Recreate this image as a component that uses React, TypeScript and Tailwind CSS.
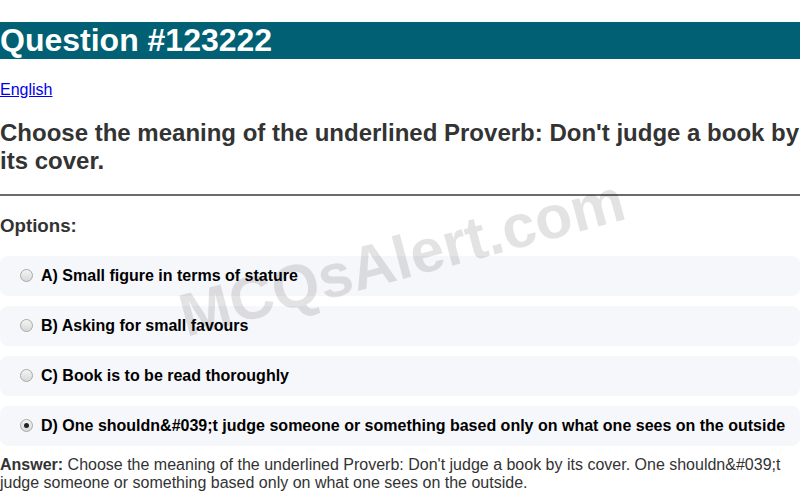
const options = [
  { label: "A) Small figure in terms of stature", checked: false },
  { label: "B) Asking for small favours", checked: false },
  { label: "C) Book is to be read thoroughly", checked: false },
  {
    label: "D) One shouldn&#039;t judge someone or something based only on what one sees on the outside",
    checked: true,
  },
];

function Radio({ checked }: { checked: boolean }) {
  return (
    <span className="flex h-[13px] w-[13px] shrink-0 items-center justify-center rounded-full border border-[#a9a9a9] bg-gradient-to-b from-[#f4f4f4] to-[#d8d8d8]">
      {checked && <span className="h-[5px] w-[5px] rounded-full bg-[#222]" />}
    </span>
  );
}

export default function App() {
  return (
    <div className="relative min-h-[492px] overflow-hidden bg-white font-['Liberation_Sans',Arial,sans-serif]">
      <h1 className="mt-[22px] bg-[#016073] text-[32px] leading-[37px] font-bold text-white">
        Question #123222
      </h1>

      <p className="mt-[22px] text-base leading-[18px]">
        <a href="#" className="text-[#0000ee] underline">
          English
        </a>
      </p>

      <h2 className="mt-5 text-[24px] leading-[27.5px] font-bold text-[#333]">
        Choose the meaning of the underlined Proverb: Don't judge a book by its cover.
      </h2>

      <hr className="mt-5 border-0 border-t-2 border-[#6b6b6b]" />

      <h3 className="mt-[19px] text-[18.7px] leading-[21.5px] font-bold text-[#333]">Options:</h3>

      <div className="mt-[19px] flex flex-col gap-[10px]">
        {options.map((o) => (
          <div
            key={o.label}
            className="flex h-10 items-center gap-2 rounded-lg bg-[#f6f7fb] pl-5 text-base font-bold text-black"
          >
            <Radio checked={o.checked} />
            <span>{o.label}</span>
          </div>
        ))}
      </div>

      <p className="mt-[10px] text-base leading-[18.4px] text-[#333]">
        <b>Answer:</b> Choose the meaning of the underlined Proverb: Don't judge a book by its cover. One
        shouldn&amp;#039;t judge someone or something based only on what one sees on the outside.
      </p>

      {/* watermark */}
      <div className="pointer-events-none absolute top-[258px] left-[402px] -translate-x-1/2 -translate-y-1/2 -rotate-[15deg] text-[61px] leading-none font-bold whitespace-nowrap text-black/[0.11]">
        MCQsAlert.com
      </div>
    </div>
  );
}
